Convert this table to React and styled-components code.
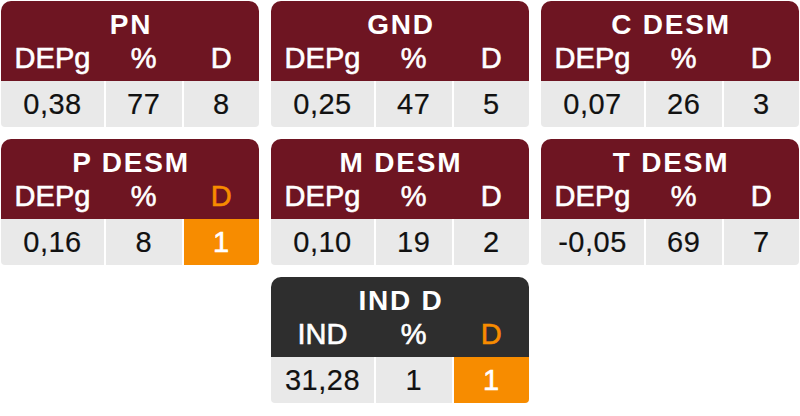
import React from "react";
import styled, { createGlobalStyle } from "styled-components";

const GlobalStyle = createGlobalStyle`
  body {
    margin: 0;
    background: #ffffff;
    font-family: "Liberation Sans", Arial, sans-serif;
  }
`;

const cards = [
  { title: "PN", first: "DEPg", values: ["0,38", "77", "8"] },
  { title: "GND", first: "DEPg", values: ["0,25", "47", "5"] },
  { title: "C DESM", first: "DEPg", values: ["0,07", "26", "3"] },
  { title: "P DESM", first: "DEPg", values: ["0,16", "8", "1"], alert: true },
  { title: "M DESM", first: "DEPg", values: ["0,10", "19", "2"] },
  { title: "T DESM", first: "DEPg", values: ["-0,05", "69", "7"] },
  { title: "IND D", first: "IND", values: ["31,28", "1", "1"], alert: true, dark: true, col: 2 },
];

const Board = styled.div`
  display: grid;
  grid-template-columns: repeat(3, 258px);
  grid-auto-rows: 126px;
  column-gap: 12px;
  row-gap: 12px;
  padding: 1px;
`;

const Card = styled.div`
  grid-column: ${(p) => p.$col || "auto"};
  display: flex;
  flex-direction: column;
`;

const Head = styled.div`
  height: 80px;
  background: ${(p) => (p.$dark ? "#2e2e2e" : "#6e1522")};
  border-radius: 10px 10px 0 0;
  color: #ffffff;
  display: flex;
  flex-direction: column;
`;

const Title = styled.div`
  margin-top: 6px;
  line-height: 36px;
  font-size: 28px;
  font-weight: 700;
  letter-spacing: 1.8px;
  text-align: center;
  padding-left: 2px;
`;

const Cols = styled.div`
  display: grid;
  grid-template-columns: 103px 1fr 1fr;
  column-gap: 2px;
`;

const Label = styled.div`
  line-height: 30px;
  font-size: 29px;
  font-weight: 400;
  -webkit-text-stroke: 0.6px currentColor;
  text-align: center;
  color: ${(p) => (p.$alert ? "#f78c00" : "#ffffff")};
`;

const Cell = styled.div`
  height: 46px;
  line-height: 46px;
  font-size: 29px;
  font-weight: 400;
  letter-spacing: 0.5px;
  text-align: center;
  background: ${(p) => (p.$alert ? "#f78c00" : "#e9e9e9")};
  color: ${(p) => (p.$alert ? "#ffffff" : "#111111")};
  -webkit-text-stroke: ${(p) => (p.$alert ? "0.6px" : "0.2px")} currentColor;
  &:first-child {
    border-bottom-left-radius: 4px;
  }
  &:last-child {
    border-bottom-right-radius: 4px;
  }
`;

export default function App() {
  return (
    <>
      <GlobalStyle />
      <Board>
        {cards.map((c) => (
          <Card key={c.title} $col={c.col}>
            <Head $dark={c.dark}>
              <Title>{c.title}</Title>
              <Cols>
                <Label>{c.first}</Label>
                <Label>%</Label>
                <Label $alert={c.alert}>D</Label>
              </Cols>
            </Head>
            <Cols>
              {c.values.map((v, i) => (
                <Cell key={i} $alert={c.alert && i === 2}>
                  {v}
                </Cell>
              ))}
            </Cols>
          </Card>
        ))}
      </Board>
    </>
  );
}
